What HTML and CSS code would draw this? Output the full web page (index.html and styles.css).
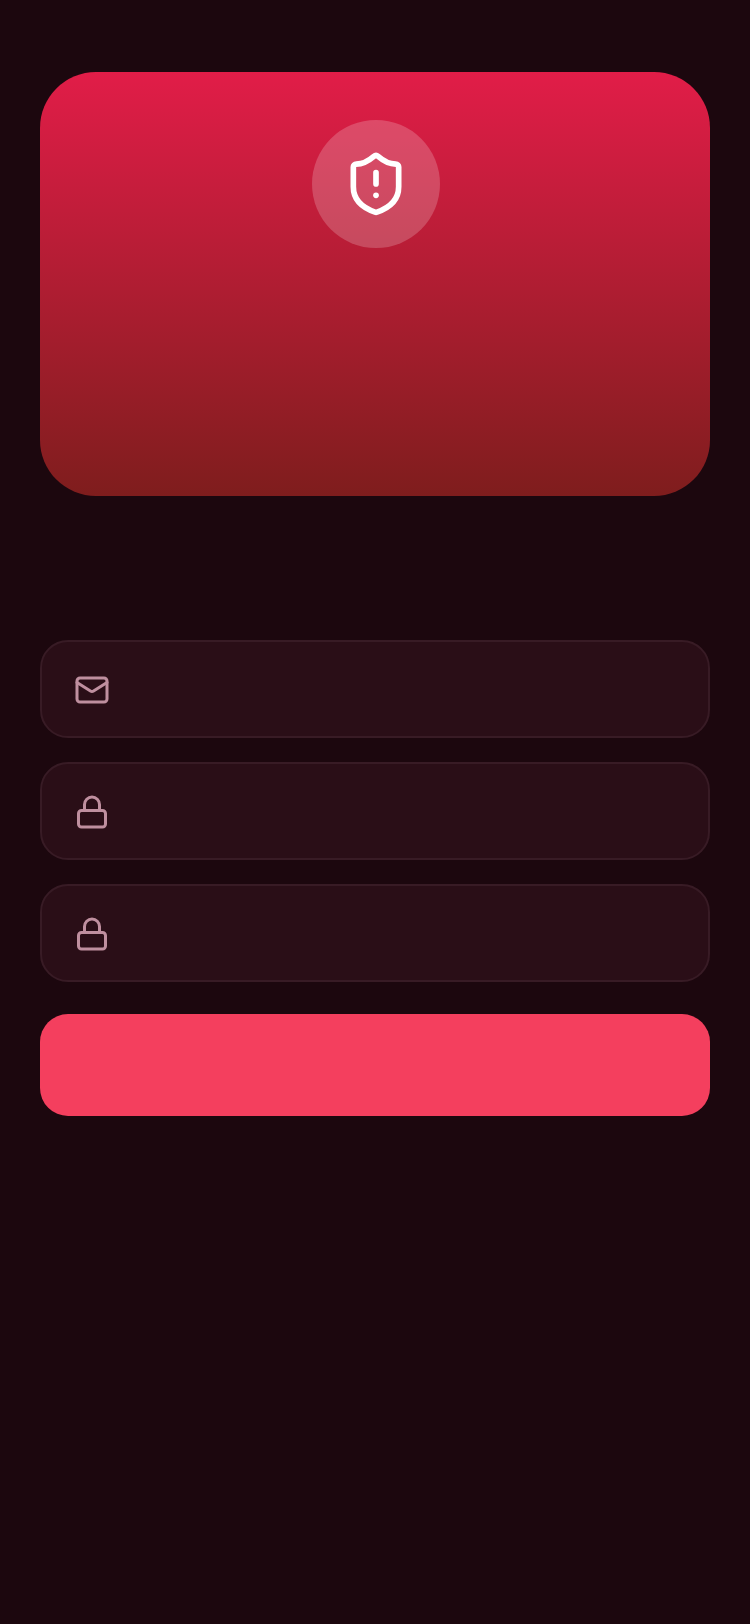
FILE: index.html
```html
<!DOCTYPE html>
<html lang="en">
<head>
<meta charset="utf-8">
<title>Reset password</title>
<link rel="stylesheet" href="styles.css">
</head>
<body>
<main class="screen">
  <section class="hero">
    <div class="hero-badge">
      <svg class="hero-icon" viewBox="0 0 24 24" fill="none" stroke="currentColor" stroke-width="2" stroke-linecap="round" stroke-linejoin="round">
        <path d="M20 13c0 5-3.5 7.5-7.66 8.95a1 1 0 0 1-.67-.01C7.5 20.5 4 18 4 13V6a1 1 0 0 1 1-1c2 0 4.5-1.2 6.24-2.72a1.17 1.17 0 0 1 1.52 0C14.51 3.81 17 5 19 5a1 1 0 0 1 1 1z"/>
        <path d="M12 8v4"/>
        <path d="M12 16h.01"/>
      </svg>
    </div>
  </section>
  <form class="form">
    <div class="fields">
      <div class="field">
        <svg class="field-icon" viewBox="0 0 24 24" fill="none" stroke="currentColor" stroke-width="2" stroke-linecap="round" stroke-linejoin="round">
          <rect x="2" y="4" width="20" height="16" rx="2"/>
          <path d="m22 7-8.97 5.7a1.94 1.94 0 0 1-2.06 0L2 7"/>
        </svg>
      </div>
      <div class="field">
        <svg class="field-icon" viewBox="0 0 24 24" fill="none" stroke="currentColor" stroke-width="2" stroke-linecap="round" stroke-linejoin="round">
          <rect x="3" y="11" width="18" height="11" rx="2"/>
          <path d="M7 11V7a5 5 0 0 1 10 0v4"/>
        </svg>
      </div>
      <div class="field">
        <svg class="field-icon" viewBox="0 0 24 24" fill="none" stroke="currentColor" stroke-width="2" stroke-linecap="round" stroke-linejoin="round">
          <rect x="3" y="11" width="18" height="11" rx="2"/>
          <path d="M7 11V7a5 5 0 0 1 10 0v4"/>
        </svg>
      </div>
    </div>
    <div class="submit"></div>
  </form>
</main>
</body>
</html>
```

FILE: styles.css
```css
* {
  box-sizing: border-box;
}

html,
body {
  margin: 0;
  height: 100%;
  background: #1c070e;
}

.screen {
  min-height: 100%;
  padding: 72px 40px 0;
  display: flex;
  flex-direction: column;
  font-family: "Inter", "Liberation Sans", sans-serif;
}

.hero {
  height: 424px;
  padding: 48px 0 0 2px;
  border-radius: 56px;
  background: linear-gradient(180deg, #e11d48 0%, #7f1d1d 100%);
  display: flex;
  justify-content: center;
  align-items: flex-start;
}

.hero-badge {
  width: 128px;
  height: 128px;
  border-radius: 50%;
  background: rgba(255, 255, 255, 0.2);
  display: flex;
  align-items: center;
  justify-content: center;
}

.hero-icon {
  width: 68px;
  height: 68px;
  color: #ffffff;
}

.form {
  margin-top: 144px;
  display: flex;
  flex-direction: column;
  gap: 32px;
}

.fields {
  display: flex;
  flex-direction: column;
  gap: 24px;
}

.field {
  height: 98px;
  padding: 2px 32px 0;
  border: 2px solid #381b25;
  border-radius: 28px;
  background: #2a0e17;
  display: flex;
  align-items: center;
}

.field-icon {
  width: 36px;
  height: 36px;
  color: #bf8f9f;
}

.submit {
  height: 102px;
  border-radius: 28px;
  background: #f43f5e;
}
```
